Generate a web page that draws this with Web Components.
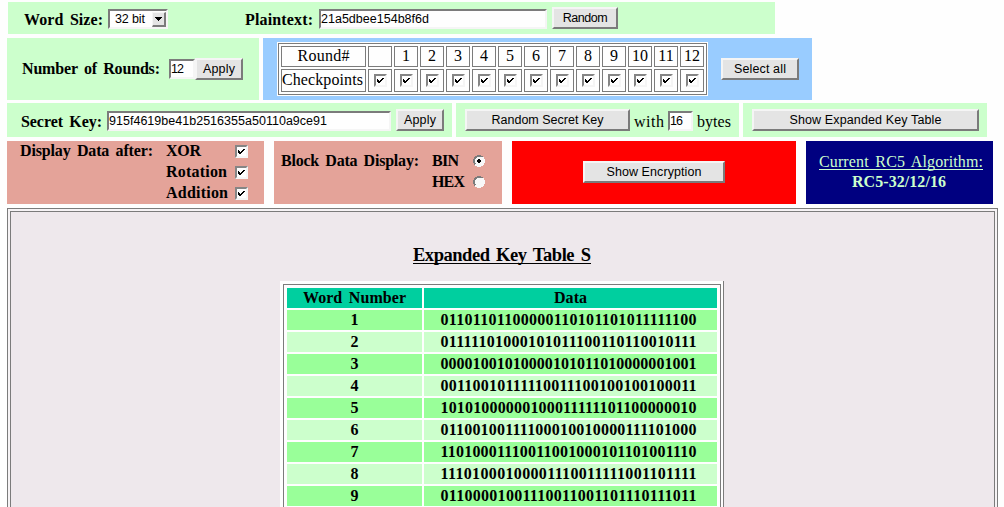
<!DOCTYPE html>
<html lang="en">
<head>
<meta charset="utf-8">
<title>RC5</title>
<style>
html,body{margin:0;background:#fefefe}
body{height:507px;overflow:hidden;font:16px/18px "Liberation Serif",serif;color:#000}
</style>
</head>
<body>
<rc-app></rc-app>
<script>
class Base extends HTMLElement{
  constructor(){super();this.attachShadow({mode:'open'});}
  render(html){
    this.shadowRoot.innerHTML=html;
    const m=(this.getAttribute('at')||'').split(' ');
    if(m.length===2){this.style.marginLeft=m[0]+'px';this.style.marginTop=m[1]+'px';}
  }
  // Spread the letters of a text so that it spans the given width.
  fit(el,width){
    if(!width)return;
    const w=el.getBoundingClientRect().width,n=this.textContent.length;
    if(n>1)el.style.letterSpacing=((width-w)/(n-1))+'px';
  }
}
const sans='font:12.5px/16px "Liberation Sans",Arial,sans-serif;';

customElements.define('rc-text',class extends Base{
  connectedCallback(){
    const w=+this.getAttribute('w');
    this.render(`<style>:host{display:block;flex:none;height:18px;white-space:nowrap;${w?`width:${w}px;`:''}}
    :host([b]){font-weight:bold}
    :host([u]) span{border-bottom:1px solid;display:inline-block;height:16px}
    :host([big]){font-size:18.5px;height:22px}
    :host([big]) span{line-height:20px;height:18px}
    span{display:inline-block;word-spacing:2.5px}</style><span><slot></slot></span>`);
    this.fit(this.shadowRoot.querySelector('span'),w);
  }
});
customElements.define('rc-button',class extends Base{
  connectedCallback(){
    this.render(`<style>:host{box-sizing:border-box;display:block;flex:none;width:${this.getAttribute('w')}px;height:22px;border:2px solid;border-color:#f5f5f5 #7b7b7b #7b7b7b #f5f5f5;background:#e4e4e4;color:#000;${sans}line-height:18px;text-align:center;white-space:nowrap}
    span{display:inline-block}</style><span><slot></slot></span>`);
    this.fit(this.shadowRoot.querySelector('span'),+this.getAttribute('tw'));
  }
});
customElements.define('rc-field',class extends Base{
  connectedCallback(){
    this.render(`<style>:host{box-sizing:border-box;display:block;flex:none;width:${this.getAttribute('w')}px;height:20px;border:2px solid;border-color:#7b7b7b #f5f5f5 #f5f5f5 #7b7b7b;background:#fefefe;${sans}white-space:nowrap}
    span{display:inline-block}</style><span><slot></slot></span>`);
    this.fit(this.shadowRoot.querySelector('span'),+this.getAttribute('tw'));
  }
});
customElements.define('rc-select',class extends Base{
  connectedCallback(){
    this.render(`<style>:host{box-sizing:border-box;display:flex;flex:none;width:60px;height:20px;border:2px solid;border-color:#7b7b7b #f5f5f5 #f5f5f5 #7b7b7b;background:#fefefe;${sans}justify-content:space-between;padding-left:5px;white-space:nowrap}
    span{display:inline-block}
    i{box-sizing:border-box;width:14px;height:15px;margin-top:1px;border:solid;border-width:1px 2px 2px 1px;border-color:#f5f5f5 #7b7b7b #7b7b7b #f5f5f5;background:#e4e4e4}
    svg{display:block;margin:4px 0 0 2px}</style><span><slot></slot></span><i><svg width="7" height="4" shape-rendering="crispEdges"><path d="M0 0h7v1H0zM1 1h5v1H1zM2 2h3v1H2zM3 3h1v1H3z"/></svg></i>`);
    this.fit(this.shadowRoot.querySelector('span'),30);
  }
});
customElements.define('rc-check',class extends Base{
  connectedCallback(){
    this.render(`<style>:host{box-sizing:border-box;display:block;flex:none;width:13px;height:13px;border:2px solid;border-color:#858585 #f5f5f5 #f5f5f5 #858585;background:#fefefe}svg{display:block}</style>
    <svg width="9" height="9" shape-rendering="crispEdges"><path d="M1 3h1v3H1zM2 4h1v3H2zM3 5h1v2H3zM4 4h1v2H4zM5 3h1v2H5zM6 2h1v2H6zM7 2h1v1H7z"/></svg>`);
  }
});
customElements.define('rc-radio',class extends Base{
  connectedCallback(){
    const dot=this.hasAttribute('on')?'<path d="M5 4h2v1h1v2H7v1H5V7H4V5h1z"/>':'';
    this.render(`<style>:host{display:block;flex:none;width:12px;height:12px}svg{display:block}</style>
    <svg width="12" height="12" shape-rendering="crispEdges"><path fill="#f8f8f8" d="M4 0h4v1h2v1h1v2h1v4h-1v2h-1v1H8v1H4v-1H2v-1H1V8H0V4h1V2h1V1h2z"/><path fill="#7b7b7b" d="M4 0h4v1h2v1H4v1H3v1H2v4h1v1H2v1H1V8H0V4h1V2h1V1h2z"/>${dot}</svg>`);
  }
});
customElements.define('rc-row',class extends Base{
  connectedCallback(){
    this.render(`<style>:host{display:flex;align-items:flex-start;gap:var(--gap,0)}</style><slot></slot>`);
  }
});
customElements.define('rc-panel',class extends Base{
  connectedCallback(){
    this.render(`<style>:host{box-sizing:border-box;display:flex;flex:none;align-items:flex-start;width:${this.getAttribute('w')}px;height:${this.getAttribute('h')}px;background:${this.getAttribute('bg')||'#cfc'}}
    :host([col]){flex-direction:column}</style><slot></slot>`);
  }
});
customElements.define('rc-checkpoints',class extends Base{
  connectedCallback(){
    const nums=['',...Array.from({length:12},(_,i)=>i+1)];
    this.render(`<style>:host{box-sizing:border-box;display:block;width:431px;height:54px;border:1px solid #fefefe;background:#fefefe}
    .o{box-sizing:border-box;height:52px;border:1px solid #7b7b7b;padding:2px;display:grid;grid-template-columns:85px repeat(13,24px);grid-template-rows:21px 23px;gap:2px}
    .c{box-sizing:border-box;border:1px solid #7b7b7b;display:flex;justify-content:center;align-items:flex-start}
    rc-check{margin-top:4px}</style>
    <div class="o"><div class="c"><rc-text w="52">Round#</rc-text></div>${nums.map(n=>`<div class="c"><rc-text>${n}</rc-text></div>`).join('')}
    <div class="c"><rc-text w="81" style="margin:1px 2px 0 0">Checkpoints</rc-text></div>${nums.map(()=>'<div class="c"><rc-check></rc-check></div>').join('')}</div>`);
  }
});
customElements.define('rc-keytable',class extends Base{
  connectedCallback(){
    const rows=['01101101100000110101101011111100','01111101000101011100110110010111','00001001010000101011010000001001','00110010111110011100100100100011','10101000000100011111101100000010','01100100111100010010000111101000','11010001110011001000101101001110','11101000100001110011111001101111','01100001001110011001101110111011'];
    this.render(`<style>:host{box-sizing:border-box;display:block;width:444px;height:240px;background:#fefefe;border-right:1px solid #7b7b7b;padding:3px 2px 0 3px;font-weight:bold}
    .o{border:1px solid #7b7b7b;border-bottom:0;padding:3px 3px 0;height:233px;display:grid;grid-template-columns:135px 293px;grid-auto-rows:20px;gap:2px;align-content:start}
    .c{display:flex;justify-content:center;align-items:flex-start;padding-top:1px;box-sizing:border-box}
    .d{padding-right:4px}
    .h{background:#00cf9f}.a{background:#9f9}.b{background:#cfc}</style>
    <div class="o"><div class="c h"><rc-text w="103">Word Number</rc-text></div><div class="c h"><rc-text w="33">Data</rc-text></div>
    ${rows.map((r,i)=>`<div class="c ${i%2?'b':'a'}"><rc-text>${i+1}</rc-text></div><div class="c d ${i%2?'b':'a'}"><rc-text w="256">${r}</rc-text></div>`).join('')}</div>`);
  }
});
customElements.define('rc-frame',class extends Base{
  connectedCallback(){
    this.render(`<style>:host{display:block;box-sizing:border-box;width:991px;height:320px;border:1px solid #7b7b7b;padding:2px;background:#f6f3f5}
    .i{box-sizing:border-box;height:316px;border:1px solid #7b7b7b;background:#eee8ec;display:flex;flex-direction:column;align-items:flex-start}</style><div class="i"><slot></slot></div>`);
  }
});
customElements.define('rc-app',class extends Base{
  connectedCallback(){
    this.render(`<style>:host{display:block;padding:2px 0 0 7px}</style>
    <rc-row><rc-panel at="1 0" w="767" h="32">
      <rc-text b at="16 9" w="79">Word Size:</rc-text><rc-select at="5 7">32 bit</rc-select>
      <rc-text b at="77 9" w="68">Plaintext:</rc-text><rc-field at="6 7" w="228" tw="108">21a5dbee154b8f6d</rc-field>
      <rc-button at="5 5" w="66" tw="45">Random</rc-button></rc-panel></rc-row>
    <rc-row at="0 4" style="--gap:4px">
      <rc-panel w="252" h="62"><rc-text b at="15 22" w="138">Number of Rounds:</rc-text><rc-field at="9 21" w="26" tw="13">12</rc-field><rc-button at="0 20" w="48" tw="32">Apply</rc-button></rc-panel>
      <rc-panel w="549" h="62" bg="#9cf"><rc-checkpoints at="14 4"></rc-checkpoints><rc-button at="13 20" w="78" tw="52">Select all</rc-button></rc-panel></rc-row>
    <rc-row at="0 3" style="--gap:4px">
      <rc-panel w="445" h="34"><rc-text b at="14 10" w="81">Secret Key:</rc-text><rc-field at="5 8" w="284" tw="218">915f4619be41b2516355a50110a9ce91</rc-field><rc-button at="5 6" w="48" tw="32">Apply</rc-button></rc-panel>
      <rc-panel w="283" h="34"><rc-button at="9 6" w="165" tw="112">Random Secret Key</rc-button><rc-text at="4 10" w="30">with</rc-text><rc-field at="4 8" w="25" tw="13">16</rc-field><rc-text at="4 10" w="34">bytes</rc-text></rc-panel>
      <rc-panel w="244" h="34"><rc-button at="9 6" w="227" tw="152">Show Expanded Key Table</rc-button></rc-panel></rc-row>
    <rc-row at="0 4" style="--gap:10px">
      <rc-panel w="257" h="63" bg="#e4a399"><rc-text b at="13 1" w="133">Display Data after:</rc-text>
        <div style="margin:1px 0 0 13px;width:62px;display:grid;gap:3px"><rc-text b w="35">XOR</rc-text><rc-text b w="61">Rotation</rc-text><rc-text b w="62">Addition</rc-text></div>
        <div style="margin:4px 0 0 7px;display:grid;gap:8px"><rc-check></rc-check><rc-check></rc-check><rc-check></rc-check></div></rc-panel>
      <rc-panel w="228" h="63" bg="#e4a399"><rc-text b at="7 11" w="138">Block Data Display:</rc-text>
        <div style="margin:11px 0 0 13px;width:33px;display:grid;gap:3px"><rc-text b w="27">BIN</rc-text><rc-text b w="33">HEX</rc-text></div>
        <div style="margin:14px 0 0 8px;display:grid;gap:9px"><rc-radio on></rc-radio><rc-radio></rc-radio></div></rc-panel>
      <rc-panel w="284" h="63" bg="#f00"><rc-button at="71 20" w="142" tw="95">Show Encryption</rc-button></rc-panel>
      <rc-panel col w="187" h="63" bg="#000080" style="color:#cfc"><rc-text u at="13 12" w="164">Current RC5 Algorithm:</rc-text><rc-text b at="46 2" w="94">RC5-32/12/16</rc-text></rc-panel></rc-row>
    <rc-frame at="0 4"><rc-text b u big at="402 33" w="178">Expanded Key Table S</rc-text><rc-keytable at="269 14"></rc-keytable></rc-frame>`);
  }
});
</script>
</body>
</html>
